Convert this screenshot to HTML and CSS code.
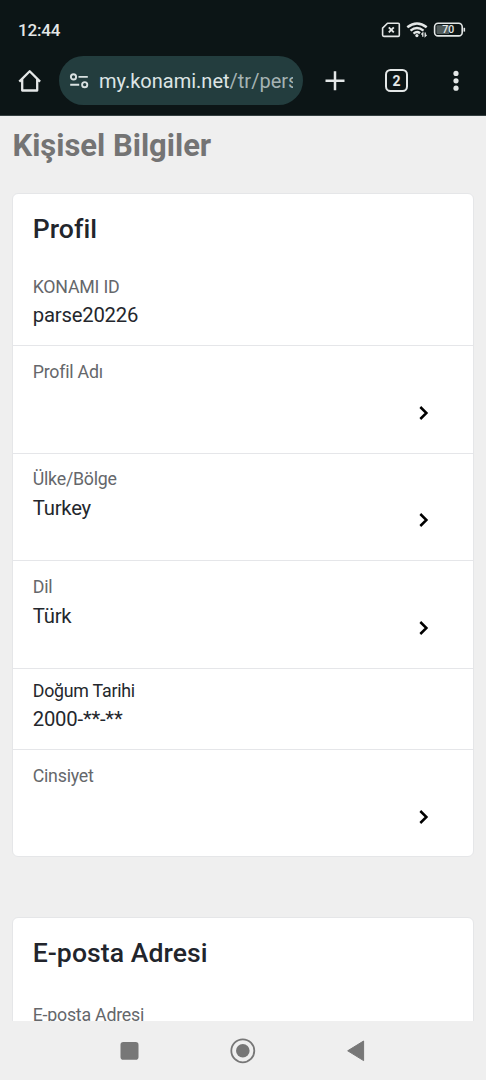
FILE: index.html
```html
<!DOCTYPE html>
<html lang="tr">
<head>
<meta charset="utf-8">
<meta name="viewport" content="width=device-width">
<title>Kişisel Bilgiler</title>
<link rel="stylesheet" href="styles.css">
</head>
<body>
<div class="screen">
  <header class="browser">
    <div class="status">
      <span class="clock">12:44</span>
      <svg class="status-icons" width="86" height="22" viewBox="0 0 86 22" fill="none" stroke="#e4e7e7">
        <path d="M7.500 4.200H18.200A1.100 1.100 0 0 1 19.300 5.300v11A1.100 1.100 0 0 1 18.200 17.400H3.900A1.300 1.300 0 0 1 2.600 16.100V9.100Z" stroke-width="1.600" stroke-linejoin="round"/>
        <path d="M8.800 8.300l5 5m0-5l-5 5" stroke-width="1.900"/>
        <path d="M27.300 8.300Q37 .5 46.700 8.300M30.500 11.600Q37 6.300 43.500 11.600M33.500 14.600Q37 11.800 40 14.200" stroke-width="2.400"/>
        <circle cx="36.900" cy="16.600" r="1.600" fill="#e4e7e7" stroke="none"/>
        <path d="M42.800 17.800v-3.700l-1.400 1.400M45.200 13.600v3.700l1.400-1.400" stroke-width="1.300"/>
        <rect x="54.600" y="4.300" width="27.600" height="12.600" rx="3.500" stroke-width="1.600"/>
        <path d="M57.500 6.300H69v8.600H57.500a1 1 0 0 1-1-1V7.300a1 1 0 0 1 1-1Z" fill="#515b5b" stroke="none"/>
        <path d="M84.300 8.800v3.800" stroke-width="1.600"/>
        <text class="battery" x="68.300" y="14.400" text-anchor="middle">70</text>
      </svg>
    </div>
    <div class="toolbar">
      <svg class="home" width="24" height="24" viewBox="0 0 24 24" fill="none" stroke="#e4e7e7" stroke-width="2.300" stroke-linejoin="round"><path d="M1.300 12.600L11.700 2.200l10.400 10.400M4.200 10v11.500h15V10"/></svg>
      <div class="address">
        <svg class="tune" width="20" height="18" viewBox="0 0 20 18" fill="none" stroke="#d9e1e1" stroke-width="1.900"><circle cx="4.500" cy="4.900" r="2.600"/><circle cx="15.700" cy="12.700" r="2.600"/><path d="M9.500 4.900h9.300M1.200 12.700h9"/></svg>
        <span class="url">my.konami.net<span class="path">/tr/pers</span></span>
      </div>
      <svg class="plus" width="20" height="20" viewBox="0 0 20 20" stroke="#e4e7e7" stroke-width="2.500"><path d="M0.500 9.800h19M10 .3v19"/></svg>
      <span class="tabs">2</span>
      <svg class="more" width="6" height="22" viewBox="0 0 6 22" fill="#e4e7e7"><circle cx="3" cy="3.400" r="2.600"/><circle cx="3" cy="10.800" r="2.600"/><circle cx="3" cy="18.200" r="2.600"/></svg>
    </div>
  </header>
  <main class="page">
    <h1 class="title">Kişisel Bilgiler</h1>
    <section class="card">
      <h2 class="heading">Profil</h2>
      <div class="row first"><div class="label">KONAMI ID</div><div class="value">parse20226</div></div>
      <div class="row link"><div class="label">Profil Adı</div><svg class="chevron" width="12" height="16" viewBox="0 0 12 16"><path d="M2.300 2L8.400 8l-6.100 6"/></svg></div>
      <div class="row link"><div class="label">Ülke/Bölge</div><div class="value">Turkey</div><svg class="chevron" width="12" height="16" viewBox="0 0 12 16"><path d="M2.300 2L8.400 8l-6.100 6"/></svg></div>
      <div class="row link"><div class="label">Dil</div><div class="value">Türk</div><svg class="chevron" width="12" height="16" viewBox="0 0 12 16"><path d="M2.300 2L8.400 8l-6.100 6"/></svg></div>
      <div class="row birth"><div class="label dark">Doğum Tarihi</div><div class="value">2000-**-**</div></div>
      <div class="row link"><div class="label">Cinsiyet</div><svg class="chevron" width="12" height="16" viewBox="0 0 12 16"><path d="M2.300 2L8.400 8l-6.100 6"/></svg></div>
    </section>
    <section class="card email">
      <h2 class="heading">E-posta Adresi</h2>
      <div class="row first"><div class="label">E-posta Adresi</div></div>
    </section>
  </main>
  <nav class="system-nav">
    <svg width="26" height="26" viewBox="0 0 26 26"><rect x="3.500" y="4" width="18" height="17.700" rx="2.800" fill="#777"/></svg>
    <svg width="26" height="26" viewBox="0 0 26 26"><circle cx="12.800" cy="12.800" r="11.500" fill="none" stroke="#777" stroke-width="1.800"/><circle cx="12.800" cy="12.800" r="6.800" fill="#777"/></svg>
    <svg width="26" height="26" viewBox="0 0 26 26"><path d="M4.700 12.800L20.600 3v19.600Z" fill="#777" stroke="#777" stroke-linejoin="round"/></svg>
  </nav>
</div>
</body>
</html>
```
FILE: styles.css
```css
* { box-sizing: border-box; }
body { margin: 0; font-family: Roboto, sans-serif; background: #efefef; }
.screen { width: 486px; height: 1080px; display: flex; flex-direction: column; overflow: hidden; }
.browser { height: 115.5px; flex: none; background: #0c1516; color: #e4e7e7; border-bottom: 1px solid #354041; }
.status { height: 56px; padding: 3px 20px 0 18px; display: flex; align-items: center; justify-content: space-between; }
.clock { font-size: 17px; font-weight: 500; letter-spacing: -.2px; }
.battery { font: 500 10.500px Roboto, sans-serif; fill: #e4e7e7; stroke: none; }
.toolbar { height: 49px; display: flex; align-items: center; padding-left: 18px; }
.home { margin-right: 17px; flex: none; }
.address { width: 244px; height: 49px; border-radius: 25px; background: #233d3e; display: flex; align-items: center; padding: 0 10px; flex: none; }
.tune { flex: none; margin-right: 10px; }
.url { width: 194.5px; overflow: hidden; white-space: nowrap; font-size: 20px; line-height: 28px; color: #dde5e5; }
.path { color: #a5b3b3; }
.plus { margin-left: 22px; flex: none; }
.tabs { width: 23px; height: 23px; margin-left: 40px; border: 2.5px solid #e4e7e7; border-radius: 5.5px; font-size: 14px; font-weight: 700; line-height: 20px; text-align: center; flex: none; }
.more { margin-left: 45px; flex: none; }
.page { flex: 1; min-height: 0; overflow: hidden; padding: 9.5px 12.5px 0; }
.title { margin: 0 0 25.5px; font-size: 31px; line-height: 42px; font-weight: 700; letter-spacing: -.02px; color: #747474; }
.card { border: 1px solid #e5e6e8; border-radius: 6px; background: #fff; height: 664px; margin-left: -.5px; }
.heading { margin: 0; padding: 16px 19.7px 0; height: 77px; font-size: 26.6px; line-height: 37px; font-weight: 500; letter-spacing: .06px; color: #22252c; }
.row { padding: 10px 19.7px 0; height: 107.400px; border-top: 1px solid #e5e6e9; position: relative; }
.first { border-top: 0; height: 74.9px; padding-top: 4.4px; }
.first .value { margin-top: 2.6px; }
.link { padding-top: 13.6px; }
.birth { height: 81.500px; }
.label { font-size: 17.8px; line-height: 24px; letter-spacing: -.23px; color: #65676b; }
.dark { color: #24272d; }
.value { font-size: 20.3px; line-height: 28px; letter-spacing: -.2px; margin-top: 2px; color: #24272d; }
.link .value { margin-top: 2.8px; }
.chevron { position: absolute; right: 43px; top: 58.7px; fill: none; stroke: #000; stroke-width: 2.500; }
.email { margin-top: 60px; }
.email .first { padding-top: 8px; }
.system-nav { height: 59px; flex: none; background: #efefef; display: flex; align-items: center; justify-content: center; gap: 87px; }
```
